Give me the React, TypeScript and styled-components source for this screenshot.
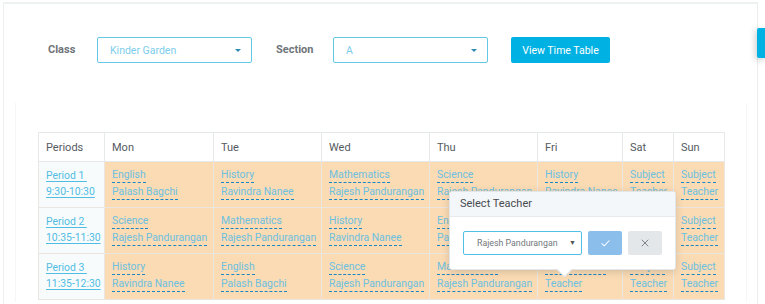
import { createGlobalStyle } from "styled-components";
import styled from "styled-components";
import { Check, X } from "lucide-react";

const GlobalStyle = createGlobalStyle`
	html, body {
		margin: 0;
		padding: 0;
		background: #ffffff;
		font-family: Roboto, "Liberation Sans", Arial, sans-serif;
	}
	* {
		box-sizing: border-box;
	}
`;

const Page = styled.div`
	position: relative;
	height: 304px;
	padding-top: 2px;
	overflow: hidden;
`;

const Panel = styled.div`
	margin-left: 3px;
	width: 755px;
	height: 302px;
	border-top: 2px solid #edf2f1;
	border-left: 1px solid #eef0f0;
	border-right: 1px solid #eceeee;
`;

const SideTab = styled.div`
	position: absolute;
	top: 28px;
	left: 757px;
	width: 10px;
	height: 30px;
	background: #00b2e3;
	border-radius: 2px 0 0 2px;
	box-shadow: -2px 2px 6px rgba(0, 0, 0, 0.18);
`;

const FilterRow = styled.div`
	display: flex;
	align-items: flex-start;
	padding: 33px 0 0 44px;
	height: 99px;
`;

const Label = styled.label<{ $width: number }>`
	width: ${({ $width }) => $width}px;
	height: 26px;
	line-height: 26px;
	font-size: 11px;
	font-weight: 700;
	color: #6f7479;
`;

const SelectBox = styled.div<{ $gap: number }>`
	display: flex;
	align-items: center;
	justify-content: space-between;
	width: 155px;
	height: 26px;
	margin-right: ${({ $gap }) => $gap}px;
	padding: 0 10px 0 12px;
	border: 1px solid #65c7e6;
	border-radius: 2px;
	font-size: 10.5px;
	color: #7dcdea;
`;

const Caret = styled.span`
	width: 0;
	height: 0;
	border-left: 3px solid transparent;
	border-right: 3px solid transparent;
	border-top: 3px solid #2d8cb6;
`;

const PrimaryButton = styled.button`
	height: 26px;
	width: 99px;
	border: none;
	border-radius: 2px;
	background: #00b2e3;
	color: #ffffff;
	font-family: inherit;
	font-size: 10.5px;
	padding: 0;
`;

const TableArea = styled.div`
	margin-left: 11px;
	width: 732px;
	height: 199px;
	border-left: 1px solid #f5f6f6;
	border-right: 1px solid #f5f6f6;
	padding: 29px 0 0 22px;
`;

const TableWrap = styled.div`
	position: relative;
	width: 687px;
`;

const Table = styled.table`
	border-collapse: collapse;
	table-layout: fixed;
	width: 686px;
	font-size: 10.4px;
`;

const Th = styled.th`
	height: 29px;
	padding: 0 7px;
	text-align: left;
	font-weight: 400;
	font-size: 11px;
	color: #555a5e;
	border: 1px solid #e5e9ea;
	background: #ffffff;
`;

const Td = styled.td<{ $period?: boolean }>`
	height: 46px;
	padding: 6px 7px 0;
	vertical-align: top;
	border: 1px solid #ebe6df;
	background: ${({ $period }) => ($period ? "#f8fbfb" : "#fadbb4")};
`;

const PeriodLink = styled.a`
	display: block;
	width: max-content;
	line-height: 16px;
	color: #51bde3;
	text-decoration: underline;
	text-underline-offset: 2px;
	white-space: pre;
`;

const Editable = styled.a`
	display: table;
	line-height: 14px;
	margin-bottom: 2px;
	color: #6cc0e0;
	border-bottom: 1px dashed #1a86c4;
	white-space: nowrap;
`;

const Popover = styled.div`
	position: absolute;
	left: 411px;
	top: 59px;
	width: 227px;
	height: 79px;
	background: #ffffff;
	border: 1px solid #e3e6e8;
	border-radius: 3px;
	box-shadow: 0 2px 8px rgba(0, 0, 0, 0.15);
	&::after {
		content: "";
		position: absolute;
		left: 109px;
		bottom: -6px;
		width: 10px;
		height: 10px;
		background: #ffffff;
		transform: rotate(45deg);
		border-right: 1px solid #e3e6e8;
		border-bottom: 1px solid #e3e6e8;
	}
`;

const PopoverTitle = styled.div`
	height: 25px;
	line-height: 24px;
	padding: 0 10px;
	background: #f4f7f9;
	border-bottom: 1px solid #e8ebee;
	font-size: 11px;
	color: #474b4f;
	border-radius: 3px 3px 0 0;
`;

const PopoverBody = styled.div`
	display: flex;
	align-items: center;
	padding: 14px 0 0 13px;
	gap: 6px;
`;

const TeacherSelect = styled.div`
	display: flex;
	align-items: center;
	justify-content: space-between;
	width: 119px;
	height: 24px;
	padding: 0 5px 0 13px;
	border: 1px solid #52c0e6;
	border-radius: 2px;
	font-size: 8.8px;
	color: #73787c;
	white-space: nowrap;
	span {
		font-size: 7px;
		color: #555;
	}
`;

const IconButton = styled.button<{ $kind: "ok" | "cancel" }>`
	display: flex;
	align-items: center;
	justify-content: center;
	width: 34px;
	height: 24px;
	border: none;
	border-radius: 2px;
	padding: 0;
	background: ${({ $kind }) => ($kind === "ok" ? "#8bbeea" : "#e4e7ea")};
	color: ${({ $kind }) => ($kind === "ok" ? "#ffffff" : "#676b6f")};
`;

type Slot = [string, string];

const rows: { period: string; time: string; slots: Slot[] }[] = [
	{
		period: "Period 1 ",
		time: "9:30-10:30",
		slots: [
			["English", "Palash Bagchi"],
			["History", "Ravindra Nanee"],
			["Mathematics", "Rajesh Pandurangan"],
			["Science", "Rajesh Pandurangan"],
			["History", "Ravindra Nanee"],
			["Subject", "Teacher"],
			["Subject", "Teacher"],
		],
	},
	{
		period: "Period 2 ",
		time: "10:35-11:30",
		slots: [
			["Science", "Rajesh Pandurangan"],
			["Mathematics", "Rajesh Pandurangan"],
			["History", "Ravindra Nanee"],
			["English", "Palash Bagchi"],
			["History", "Ravindra Nanee"],
			["Subject", "Teacher"],
			["Subject", "Teacher"],
		],
	},
	{
		period: "Period 3 ",
		time: "11:35-12:30",
		slots: [
			["History", "Ravindra Nanee"],
			["English", "Palash Bagchi"],
			["Science", "Rajesh Pandurangan"],
			["Mathematics", "Rajesh Pandurangan"],
			["Mathematics", "Teacher"],
			["Subject", "Teacher"],
			["Subject", "Teacher"],
		],
	},
];

const days = ["Mon", "Tue", "Wed", "Thu", "Fri", "Sat", "Sun"];
const widths = [66, 109, 108, 108, 108, 85, 51, 51];

export default function App() {
	return (
		<Page>
			<GlobalStyle />
			<Panel>
				<FilterRow>
					<Label $width={49}>Class</Label>
					<SelectBox $gap={24}>
						Kinder Garden
						<Caret />
					</SelectBox>
					<Label $width={57}>Section</Label>
					<SelectBox $gap={23}>
						A
						<Caret />
					</SelectBox>
					<PrimaryButton>View Time Table</PrimaryButton>
				</FilterRow>
				<TableArea>
					<TableWrap>
						<Table>
							<colgroup>
								{widths.map((w, i) => (
									<col key={i} style={{ width: w }} />
								))}
							</colgroup>
							<thead>
								<tr>
									<Th>Periods</Th>
									{days.map((d) => (
										<Th key={d}>{d}</Th>
									))}
								</tr>
							</thead>
							<tbody>
								{rows.map((r) => (
									<tr key={r.period}>
										<Td $period>
											<PeriodLink>{r.period}</PeriodLink>
											<PeriodLink>{r.time}</PeriodLink>
										</Td>
										{r.slots.map(([subject, teacher], i) => (
											<Td key={i}>
												<Editable>{subject}</Editable>
												<Editable>{teacher}</Editable>
											</Td>
										))}
									</tr>
								))}
							</tbody>
						</Table>
						<Popover>
							<PopoverTitle>Select Teacher</PopoverTitle>
							<PopoverBody>
								<TeacherSelect>
									Rajesh Pandurangan
									<span>▼</span>
								</TeacherSelect>
								<IconButton $kind="ok">
									<Check size={11} strokeWidth={2.2} />
								</IconButton>
								<IconButton $kind="cancel">
									<X size={12} strokeWidth={1.6} />
								</IconButton>
							</PopoverBody>
						</Popover>
					</TableWrap>
				</TableArea>
			</Panel>
			<SideTab />
		</Page>
	);
}
